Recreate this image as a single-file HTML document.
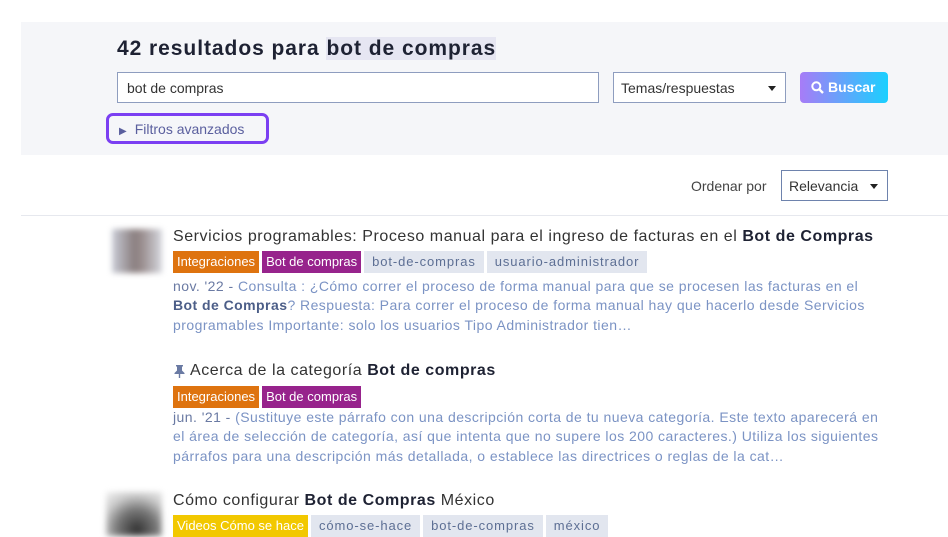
<!DOCTYPE html>
<html><head><meta charset="utf-8"><style>
*{margin:0;padding:0;box-sizing:border-box}
body{width:948px;height:530px;overflow:hidden;background:#fff;font-family:"Liberation Sans",sans-serif;position:relative;color:#222}
.abs{position:absolute;white-space:nowrap}
.panel{position:absolute;left:21px;top:22px;width:927px;height:133px;background:#f5f6f9}
h1{position:absolute;left:117px;top:37px;font-size:21px;font-weight:bold;color:#1e2233;letter-spacing:.95px}
h1 span{background:#e6e6f2}
.inp{position:absolute;left:117px;top:72px;width:482px;height:31px;border:1px solid #8e9dbf;background:#fff;font-size:14px;padding:7px 9px;color:#333}
.sel{position:absolute;top:72px;height:31px;border:1px solid #8e9dbf;background:#fff;font-size:14px;padding:7px 7px;color:#333}
.caret{position:absolute;right:9px;top:13px;border-left:4px solid transparent;border-right:4px solid transparent;border-top:5px solid #222}
.btn{position:absolute;left:800px;top:72px;width:88px;height:31px;border-radius:4px;background:linear-gradient(90deg,#a77cf7,#1ad0ff);color:#fff;font-weight:bold;font-size:14px;padding:7px 0 0 28px}
.filt{position:absolute;left:106px;top:113px;width:163px;height:31px;border:3px solid #7b3ff2;border-radius:7px;font-size:14px;color:#5a5f9e;padding:5px 0 0 10px}
.line{position:absolute;left:21px;top:215px;width:927px;height:1px;background:#e6e8ee}
.t{font-size:16px;color:#333;letter-spacing:.55px}
.t b{color:#1e2233}
.tag{display:inline-block;height:22px;font-size:13px;padding:3px 4px;margin-right:3px;vertical-align:top}
.o{background:#de730f;color:#fff}.p{background:#97238c;color:#fff}.y{background:#f2c800;color:#fff}
.g{background:#e2e6ef;color:#5d6f94;padding:3px 8px;letter-spacing:.9px}
.ex{font-size:14px;color:#7b93c4;line-height:19.3px;letter-spacing:.45px}
.ex .d{color:#6a7aa3}.ex b{color:#4c5e88}
.av{position:absolute;width:50px;height:44px;filter:blur(3px)}
</style></head><body>
<div class="panel"></div>
<h1>42 resultados para <span>bot de compras</span></h1>
<div class="inp">bot de compras</div>
<div class="sel" style="left:613px;width:173px">Temas/respuestas<span class="caret"></span></div>
<div class="btn"><svg style="position:absolute;left:11px;top:9px" width="13" height="13" viewBox="0 0 13 13"><circle cx="5.3" cy="5.3" r="4" fill="none" stroke="#fff" stroke-width="2"/><path d="M8.3 8.3L12 12" stroke="#fff" stroke-width="2.4"/></svg>Buscar</div>
<div class="filt"><span style="font-size:10px;margin-right:8px">&#9654;</span>Filtros avanzados</div>
<div class="abs" style="left:691px;top:178px;font-size:14px;color:#444">Ordenar por</div>
<div class="sel" style="left:781px;top:170px;width:107px;height:31px;border-color:#6e83ad">Relevancia<span class="caret"></span></div>
<div class="line"></div>

<div class="av" style="left:112px;top:229px;background:linear-gradient(90deg,#c9ccd6,#8a7f80 45%,#9a8e8f 60%,#d5d7de)"></div>
<div class="abs t" style="left:173px;top:228px">Servicios programables: Proceso manual para el ingreso de facturas en el <b>Bot de Compras</b></div>
<div class="abs" style="left:173px;top:251px"><span class="tag o">Integraciones</span><span class="tag p">Bot de compras</span><span class="tag g">bot-de-compras</span><span class="tag g">usuario-administrador</span></div>
<div class="abs ex" style="left:173px;top:277px"><span class="d">nov. '22 - </span>Consulta : ¿Cómo correr el proceso de forma manual para que se procesen las facturas en el<br><b>Bot de Compras</b>? Respuesta: Para correr el proceso de forma manual hay que hacerlo desde Servicios<br>programables Importante: solo los usuarios Tipo Administrador tien…</div>

<svg style="position:absolute;left:174px;top:365px" width="11" height="13" viewBox="0 0 11 13"><path d="M2 0h7v1.5H8v4l2.5 2.5V9H6.2v4H4.8V9H.5V8L3 5.5v-4H2z" fill="#6a7aa3"/></svg>
<div class="abs t" style="left:190px;top:362px">Acerca de la categoría <b>Bot de compras</b></div>
<div class="abs" style="left:173px;top:386px"><span class="tag o">Integraciones</span><span class="tag p">Bot de compras</span></div>
<div class="abs ex" style="left:173px;top:408px"><span class="d">jun. '21 - </span>(Sustituye este párrafo con una descripción corta de tu nueva categoría. Este texto aparecerá en<br>el área de selección de categoría, así que intenta que no supere los 200 caracteres.) Utiliza los siguientes<br>párrafos para una descripción más detallada, o establece las directrices o reglas de la cat…</div>

<div class="av" style="left:106px;top:492px;width:56px;height:44px;background:radial-gradient(circle at 55% 85%,#333,#777 40%,#ccc 70%,#f2f2f2)"></div>
<div class="abs t" style="left:173px;top:492px">Cómo configurar <b>Bot de Compras</b> México</div>
<div class="abs" style="left:173px;top:515px"><span class="tag y">Videos Cómo se hace</span><span class="tag g">cómo-se-hace</span><span class="tag g">bot-de-compras</span><span class="tag g">méxico</span></div>
</body></html>
